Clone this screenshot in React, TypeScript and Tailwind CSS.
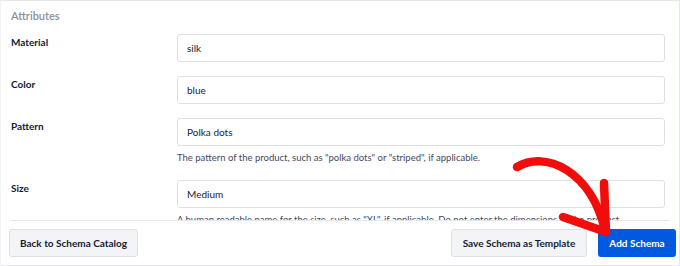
const attributes = [
  { label: "Material", value: "silk" },
  { label: "Color", value: "blue" },
  {
    label: "Pattern",
    value: "Polka dots",
    help: 'The pattern of the product, such as "polka dots" or "striped", if applicable.',
  },
  {
    label: "Size",
    value: "Medium",
    help: 'A human readable name for the size, such as "XL", if applicable. Do not enter the dimensions of the product.',
  },
];

const Arrow = () => (
  <svg
    className="pointer-events-none absolute left-0 top-0"
    width={680}
    height={266}
    viewBox="0 0 680 266"
    fill="none"
  >
    <path
      d="M516 166 C 545 149, 590 170, 604 229"
      stroke="#f20d0d"
      strokeWidth={8.5}
      strokeLinecap="round"
    />
    <path
      d="M603 182 L 605 231 L 562 216"
      stroke="#f20d0d"
      strokeWidth={8.5}
      strokeLinecap="round"
      strokeLinejoin="round"
    />
  </svg>
);

export default function App() {
  return (
    <div
      className="relative h-[266px] w-[680px] overflow-hidden border border-l-[#f3f3f5] border-[#e6e7eb] bg-white text-[#141b38]"
      style={{ fontFamily: 'Lato, "Open Sans", sans-serif' }}
    >
      <div className="mx-[9px] h-[220px] overflow-hidden border-b border-[#e6e7eb] pl-px">
        <div className="pt-[5px] text-[11px] font-semibold leading-[20px] text-[#8c8f9a]">
          Attributes
        </div>
        <div className="mt-[6px] flex flex-col gap-[12px]">
          {attributes.map((a) => (
            <div key={a.label} className="flex items-start">
              <div className="w-[166px] text-[10px] font-bold leading-[20px]">
                {a.label}
              </div>
              <div className="w-[488px] pt-[2px]">
                <div className="flex h-[28px] items-center rounded-[3px] border border-[#dfe0e5] px-[9px] text-[10px]">
                  {a.value}
                </div>
                {a.help && (
                  <div className="mt-[4px] whitespace-nowrap text-[9.5px] leading-[16px] text-[#434960]">
                    {a.help}
                  </div>
                )}
              </div>
            </div>
          ))}
        </div>
      </div>
      <div className="flex items-start justify-between pl-[8px] pr-[3px] pt-[8px]">
        <button className="h-[28px] w-[129px] rounded-[3px] border border-[#dfe0e5] bg-[#f3f4f5] text-[10px] font-bold">
          Back to Schema Catalog
        </button>
        <div className="flex gap-[11px]">
          <button className="h-[28px] w-[136px] rounded-[3px] border border-[#dfe0e5] bg-[#f3f4f5] text-[10px] font-bold">
            Save Schema as Template
          </button>
          <button className="h-[28px] w-[78px] rounded-[3px] bg-[#005ae0] text-[10px] font-bold text-white">
            Add Schema
          </button>
        </div>
      </div>
      <Arrow />
    </div>
  );
}
